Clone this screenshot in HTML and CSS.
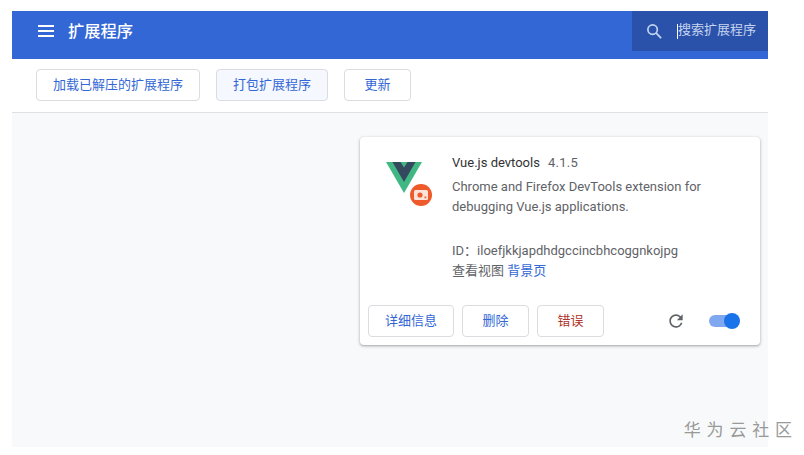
FILE: index.html
```html
<!DOCTYPE html>
<html lang="zh">
<head>
<meta charset="utf-8">
<title>扩展程序</title>
<link rel="stylesheet" href="styles.css">
</head>
<body>
<div class="app">
  <header class="header">
    <div class="brand">
      <svg class="menu" width="16" height="12" viewBox="0 0 16 12"><path d="M0 0h16v2H0zM0 5h16v2H0zM0 10h16v2H0z" fill="#fff"/></svg>
      <span class="title">扩展程序</span>
    </div>
    <div class="search">
      <svg class="search-icon" width="17" height="17" viewBox="0 0 18 18"><circle cx="7" cy="7" r="5" fill="none" stroke="#c2d4f5" stroke-width="1.8"/><path d="M10.800 10.800 16 16" stroke="#c2d4f5" stroke-width="1.900"/></svg>
      <span class="caret"></span><span class="search-text">搜索扩展程序</span>
    </div>
  </header>
  <div class="toolbar">
    <button class="btn">加载已解压的扩展程序</button>
    <button class="btn tinted">打包扩展程序</button>
    <button class="btn small">更新</button>
  </div>
  <main class="content">
    <article class="card">
      <div class="card-body">
        <div class="logo">
          <svg width="52" height="52" viewBox="0 0 52 52">
            <path d="M0 3H36L18 34z" fill="#41b883"/>
            <path d="M6.500 3h8L18 8.500 21.500 3h8L18 23z" fill="#35495e"/>
            <circle cx="35" cy="36" r="11" fill="#ee5a2b"/>
            <rect x="28" y="31" width="14" height="10" rx="1.500" fill="#fbe3da"/>
            <circle cx="34" cy="36" r="2.600" fill="#ee5a2b"/>
            <rect x="38.500" y="37.500" width="1.800" height="1.800" fill="#ee5a2b"/>
          </svg>
        </div>
        <div class="info">
          <div class="name-row"><span class="name">Vue.js devtools</span><span class="version">4.1.5</span></div>
          <p class="desc">Chrome and Firefox DevTools extension for debugging Vue.js applications.</p>
          <p class="ext-id">ID：iloefjkkjapdhdgccincbhcoggnkojpg</p>
          <p class="views">查看视图 <a class="link">背景页</a></p>
        </div>
      </div>
      <div class="card-footer">
        <button class="btn">详细信息</button>
        <button class="btn small">删除</button>
        <button class="btn small danger">错误</button>
        <div class="controls">
          <svg class="reload" width="20" height="20" viewBox="0 0 24 24"><path d="M17.650 6.350A7.958 7.958 0 0 0 12 4c-4.420 0-7.990 3.580-7.990 8s3.570 8 7.990 8c3.730 0 6.840-2.550 7.730-6h-2.080A5.990 5.990 0 0 1 12 18c-3.310 0-6-2.690-6-6s2.690-6 6-6c1.660 0 3.140.69 4.220 1.780L13 11h7V4l-2.350 2.350z" fill="#5f6368"/></svg>
          <span class="toggle"><span class="knob"></span></span>
        </div>
      </div>
    </article>
  </main>
</div>
<div class="watermark">华为云社区</div>
</body>
</html>
```
FILE: styles.css
```css
* { box-sizing: border-box; }
html, body { height: 100%; }
body {
  margin: 0;
  padding: 11px 36px 8px 12px;
  background: #fff;
  font-family: Roboto, "Noto Sans CJK SC", sans-serif;
  font-size: 13px;
  color: #5f6368;
  overflow: hidden;
  position: relative;
}
.app { display: flex; flex-direction: column; height: 436px; }
.header {
  flex: none;
  height: 48px;
  background: #3367d6;
  display: flex;
  justify-content: space-between;
  align-items: flex-start;
}
.brand { display: flex; align-items: center; height: 40px; padding-left: 26px; gap: 14px; }
.menu { display: block; }
.title { color: #fff; font-size: 16.250px; font-weight: 500; line-height: 20px; padding-top: 2px; }
.search {
  width: 136px;
  height: 40px;
  background: #2a52aa;
  display: flex;
  align-items: center;
  padding-left: 14px;
}
.search-icon { flex: none; margin-right: 14px; }
.caret { width: 1px; height: 15px; background: #fff; flex: none; }
.search-text { color: #c6d4ee; font-size: 13px; line-height: 18px; white-space: nowrap; padding-bottom: 3px; }
.toolbar {
  flex: none;
  height: 54px;
  padding: 10px 24px 0;
  border-bottom: 1px solid #dfe1e5;
  display: flex;
  gap: 16px;
  align-items: flex-start;
}
.btn {
  height: 32px;
  padding: 0 16px 3px;
  background: #fff;
  border: 1px solid #dadce0;
  border-radius: 4px;
  color: #3367d6;
  font-family: inherit;
  font-size: 13px;
  white-space: nowrap;
}
.tinted { background: #f5f8fe; }
.content {
  flex: 1;
  background: #f8f9fa;
  display: flex;
  justify-content: flex-end;
  align-items: flex-start;
  padding: 24px 8px 0 0;
}
.card {
  width: 400px;
  height: 208px;
  background: #fff;
  border-radius: 4px;
  box-shadow: 0 1px 2px rgba(60,64,67,.3), 0 1px 3px 1px rgba(60,64,67,.15);
  display: flex;
  flex-direction: column;
  justify-content: space-between;
}
.card-body { display: flex; padding: 16px 20px 0 18px; }
.logo { flex: none; width: 52px; height: 52px; margin: 6px 14px 0 8px; }
.logo svg { display: block; }
.info { flex: 1; min-width: 0; }
.name-row { display: flex; gap: 8px; line-height: 20px; }
.name { color: #333; font-size: 13px; }
.version { letter-spacing: .3px; }
.desc { margin: 4px 0 0; line-height: 20px; height: 40px; }
.ext-id { margin: 24px 0 0; line-height: 20px; }
.views { margin: 0; line-height: 20px; }
.link { color: #3367d6; }
.card-footer { display: flex; align-items: center; gap: 8px; padding: 0 23px 8px 8px; }
.small { width: 67px; padding: 0 0 3px; }
.danger { color: #b0332a; }
.controls { margin-left: auto; display: flex; align-items: center; gap: 23px; }
.reload { display: block; }
.toggle { display: block; position: relative; width: 28px; height: 12px; border-radius: 6px; background: #80a8f0; }
.knob { position: absolute; right: -3px; top: -2px; width: 16px; height: 16px; border-radius: 50%; background: #1a73e8; }
.watermark {
  position: absolute;
  right: 12px;
  bottom: 15px;
  color: #999;
  font-size: 17px;
  letter-spacing: 5.800px;
  margin-right: -5.800px;
  line-height: 20px;
}
```
